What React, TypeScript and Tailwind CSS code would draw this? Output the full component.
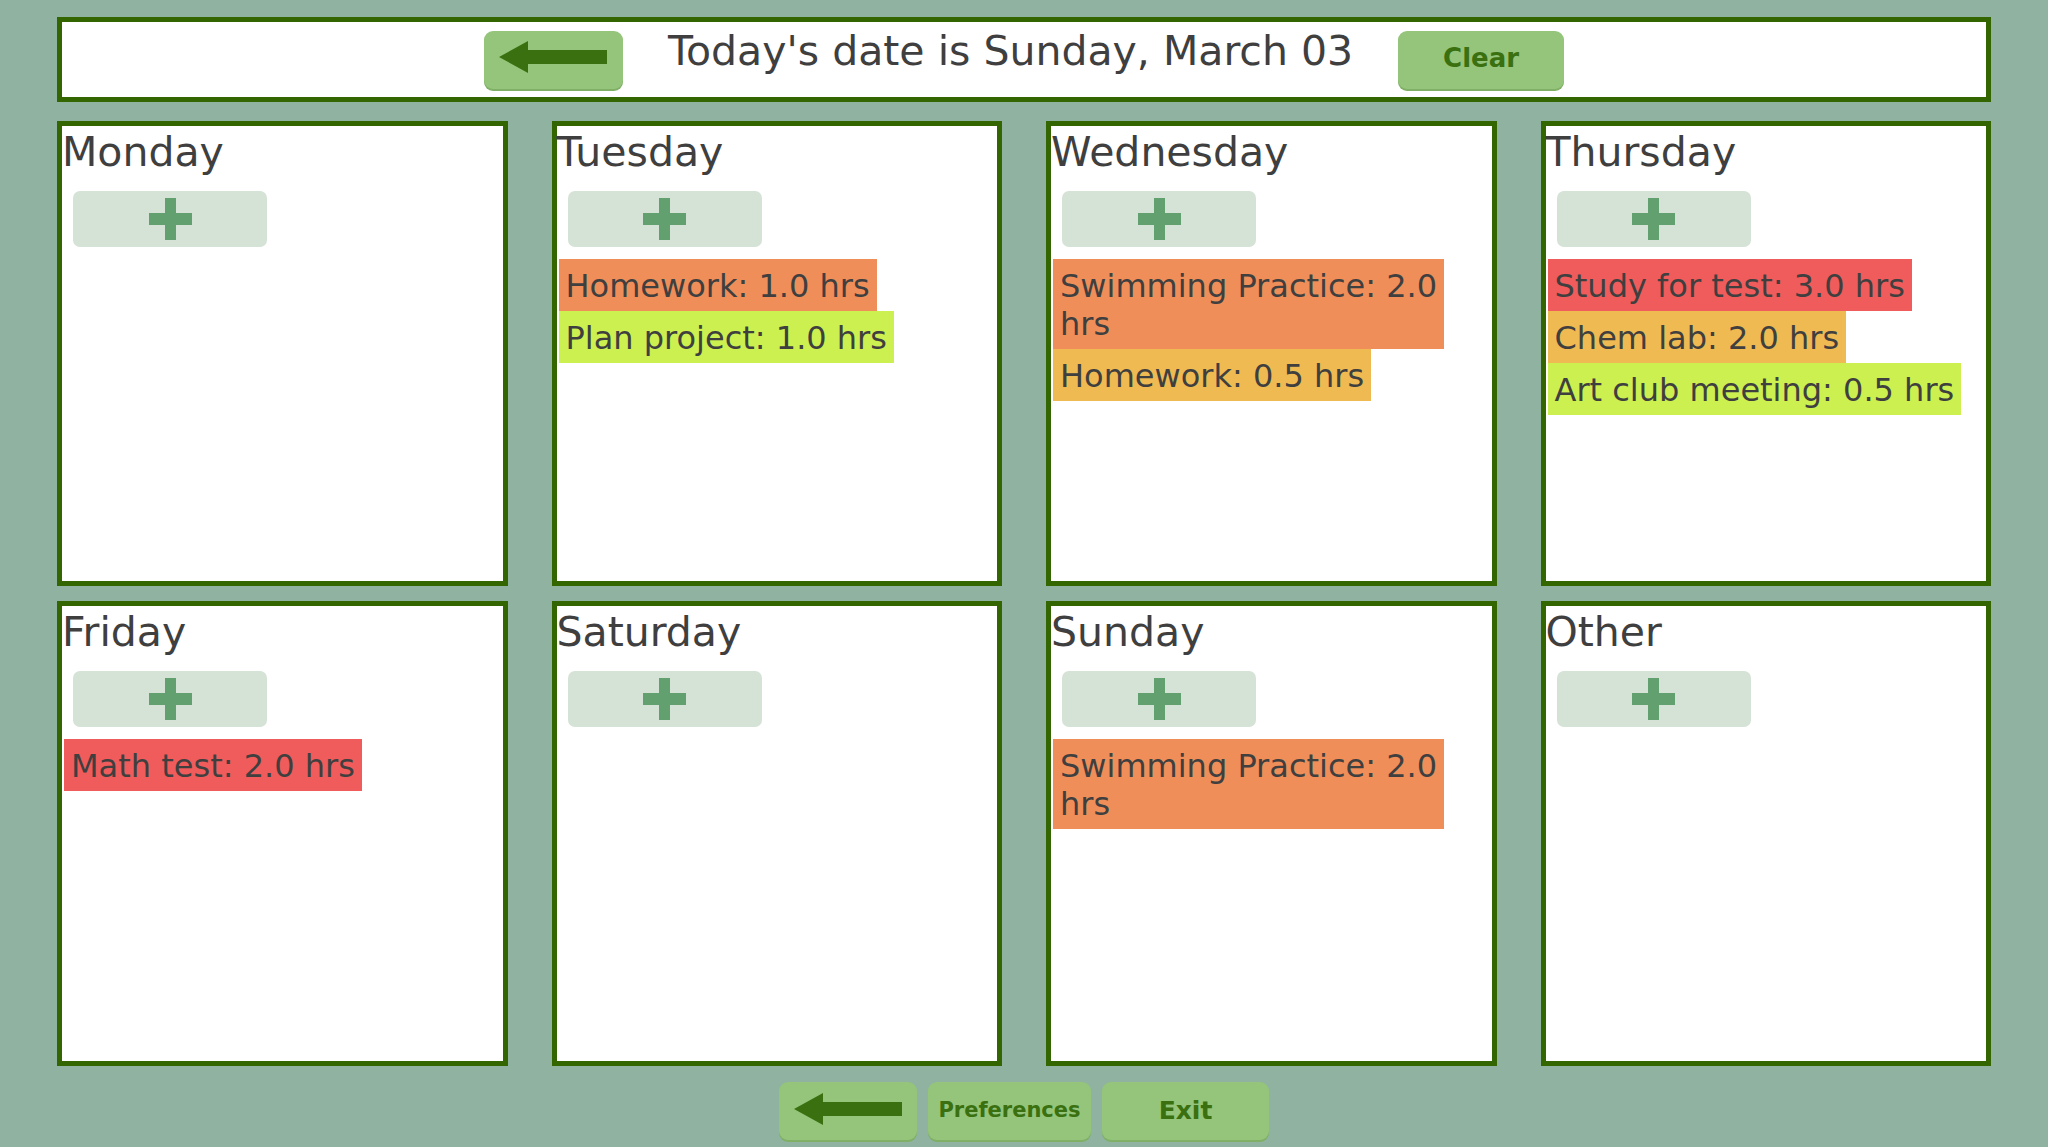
import type { ReactNode } from 'react'

type Task = {
  lines: string[]
  color: string
}

type Day = {
  name: string
  tasks: Task[]
}

const ORANGE = 'bg-[#f08e5a]'
const LIME   = 'bg-[#ccf050]'
const RED    = 'bg-[#f05c5c]'
const AMBER  = 'bg-[#f0ba52]'

const days: Day[] = [
  { name: 'Monday', tasks: [] },
  {
    name: 'Tuesday',
    tasks: [
      { lines: ['Homework: 1.0 hrs'], color: ORANGE },
      { lines: ['Plan project: 1.0 hrs'], color: LIME },
    ],
  },
  {
    name: 'Wednesday',
    tasks: [
      { lines: ['Swimming Practice: 2.0', 'hrs'], color: ORANGE },
      { lines: ['Homework: 0.5 hrs'], color: AMBER },
    ],
  },
  {
    name: 'Thursday',
    tasks: [
      { lines: ['Study for test: 3.0 hrs'], color: RED },
      { lines: ['Chem lab: 2.0 hrs'], color: AMBER },
      { lines: ['Art club meeting: 0.5 hrs'], color: LIME },
    ],
  },
  {
    name: 'Friday',
    tasks: [{ lines: ['Math test: 2.0 hrs'], color: RED }],
  },
  { name: 'Saturday', tasks: [] },
  {
    name: 'Sunday',
    tasks: [{ lines: ['Swimming Practice: 2.0', 'hrs'], color: ORANGE }],
  },
  { name: 'Other', tasks: [] },
]

function BackArrow() {
  return (
    <svg width="108" height="32" viewBox="0 0 108 32" className="mb-[5px]">
      <polygon points="0,16 29,0 29,9 108,9 108,23 29,23 29,32" fill="#3a7010" />
    </svg>
  )
}

function PlusIcon() {
  return (
    <svg width="43" height="42" viewBox="0 0 43 42">
      <rect x="16" y="0" width="11" height="42" fill="#62a070" />
      <rect x="0" y="15" width="43" height="12" fill="#62a070" />
    </svg>
  )
}

function GreenButton({ width, children }: { width: string; children: ReactNode }) {
  return (
    <button
      className={`${width} h-[58px] flex items-center justify-center rounded-[9px]
        bg-[#94c57a] shadow-[0_2px_0_#7fb066] text-[#3a7010] font-bold
        font-['DejaVu_Sans',sans-serif]`}
    >
      {children}
    </button>
  )
}

function DayCard({ day }: { day: Day }) {
  return (
    <div className="h-[465px] bg-white border-[5px] border-[#336600] flex flex-col items-start">
      <div className="pt-[3px] text-[41px] leading-[47px] text-[#3f3f3f]">
        {day.name}
      </div>

      <button className="mt-[15px] ml-[11px] w-[194px] h-[56px] rounded-[7px] bg-[#d5e2d6]
        flex items-center justify-center">
        <PlusIcon />
      </button>

      <div className="mt-[12px] ml-[2px] flex flex-col items-start">
        {day.tasks.map((task, i) => (
          <div
            key={i}
            className={`${task.color} px-[7px] pt-[8px] pb-[6px] text-[32px] leading-[38px]
              text-[#3f3f3f] whitespace-nowrap`}
          >
            {task.lines.map((line, j) => (
              <div key={j}>{line}</div>
            ))}
          </div>
        ))}
      </div>
    </div>
  )
}

export default function App() {
  return (
    <div className="min-h-screen bg-[#8fb3a0] px-[57px] pt-[17px] font-['DejaVu_Sans',sans-serif]">
      {/* Header */}
      <div className="h-[85px] bg-white border-[5px] border-[#336600] flex items-center justify-center gap-[45px]">
        <GreenButton width="w-[139px]">
          <BackArrow />
        </GreenButton>
        <span className="-mt-4 text-[41px] text-[#3f3f3f] whitespace-nowrap">
          Today's date is Sunday, March 03
        </span>
        <GreenButton width="w-[166px]">
          <span className="text-[26px] mb-[2px]">Clear</span>
        </GreenButton>
      </div>

      {/* Week grid */}
      <div className="mt-[19px] grid grid-cols-4 gap-x-[44px] gap-y-[15px]">
        {days.map(d => (
          <DayCard key={d.name} day={d} />
        ))}
      </div>

      {/* Footer buttons */}
      <div className="mt-[16px] flex justify-center gap-[11px]">
        <GreenButton width="w-[138px]">
          <BackArrow />
        </GreenButton>
        <GreenButton width="w-[163px]">
          <span className="text-[21px]">Preferences</span>
        </GreenButton>
        <GreenButton width="w-[167px]">
          <span className="text-[25px]">Exit</span>
        </GreenButton>
      </div>
    </div>
  )
}
